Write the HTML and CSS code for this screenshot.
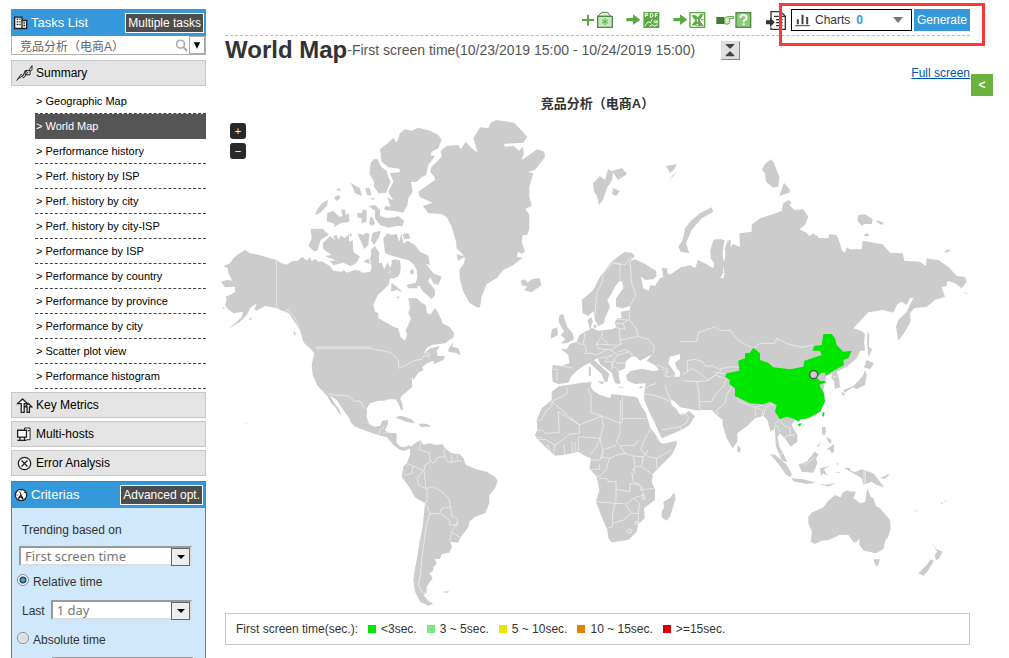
FILE: index.html
```html
<!DOCTYPE html>
<html lang="en">
<head>
<meta charset="utf-8">
<title>World Map</title>
<link rel="stylesheet" href="styles.css">
</head>
<body>
<div class="page">
  <aside class="sidebar">
    <div class="bar tasks-bar">
      <svg class="bar-icon" viewBox="42 48 42 39" aria-hidden="true"><path d="M44 50h22v10h14v24H44z" fill="#fff" stroke="#222" stroke-width="4"/><path d="M66 60v24M50 56h5M58 56h4M50 64h5M58 64h4M50 72h5M58 72h4M70 67h5M70 75h5" stroke="#222" stroke-width="4"/></svg>
      <h2 class="bar-title">Tasks List</h2>
      <button class="dark-btn" type="button">Multiple tasks</button>
    </div>
    <div class="search">
      <input class="search-input" type="text" value="竞品分析（电商A）" aria-label="Task">
      <svg class="search-icon" viewBox="524 116 40 40" aria-hidden="true"><circle cx="541" cy="132" r="12" fill="none" stroke="#aaa" stroke-width="5"/><path d="M550 141l11 12" stroke="#aaa" stroke-width="6"/></svg>
      <button class="search-drop" type="button" aria-label="Show tasks"><svg viewBox="0 0 10 10" aria-hidden="true"><path d="M1 1h8L5 9z"/></svg></button>
    </div>
    <nav class="menu">
      <button class="menu-head" type="button"><svg viewBox="46 192 52 52" aria-hidden="true"><path d="M48 240l14-20 5 6 7-16 6 4M50 236l14-9 6 4 12-17M74 209h15v13H74zM86 207l9-13v13l-6 5" fill="none" stroke="#222" stroke-width="3"/></svg>Summary</button>
      <ul class="menu-list">
        <li><a href="#">&gt; Geographic Map</a></li>
        <li><a class="active" href="#">&gt; World Map</a></li>
        <li><a href="#">&gt; Performance history</a></li>
        <li><a href="#">&gt; Perf. history by ISP</a></li>
        <li><a href="#">&gt; Perf. history by city</a></li>
        <li><a href="#">&gt; Perf. history by city-ISP</a></li>
        <li><a href="#">&gt; Performance by ISP</a></li>
        <li><a href="#">&gt; Performance by country</a></li>
        <li><a href="#">&gt; Performance by province</a></li>
        <li><a href="#">&gt; Performance by city</a></li>
        <li><a href="#">&gt; Scatter plot view</a></li>
        <li><a href="#">&gt; Performance histogram</a></li>
      </ul>
      <button class="menu-head" type="button"><svg viewBox="48 48 52 52" aria-hidden="true"><path d="M64 95V68H53l15-14 15 14H73v27zM82 95V78h-6l10-10 10 10h-7v17z" fill="#fff" stroke="#222" stroke-width="4"/></svg>Key Metrics</button>
      <button class="menu-head" type="button"><svg viewBox="48 134 52 52" aria-hidden="true"><path d="M74 147v-7h17v36H80" fill="#fff" stroke="#222" stroke-width="3"/><path d="M53 147h27v21H53zM60 169v7M74 169v7M52 178h28M84 148h5" fill="#fff" stroke="#222" stroke-width="4"/></svg>Multi-hosts</button>
      <button class="menu-head" type="button"><svg viewBox="46 220 52 52" aria-hidden="true"><circle cx="72" cy="246" r="19" fill="#f4f4f4" stroke="#222" stroke-width="4"/><path d="M63 237l18 18M81 237l-18 18" stroke="#222" stroke-width="4"/></svg>Error Analysis</button>
    </nav>
    <section class="criteria">
      <div class="bar criteria-bar">
        <svg class="bar-icon" viewBox="43 324 44 42" aria-hidden="true"><circle cx="65" cy="345" r="18" fill="#fff" stroke="#222" stroke-width="4"/><path d="M65 342l8 14-4 3-5-7-6 6-3-4z" fill="#222"/><path d="M65 345l-4-11M51 345h4M75 338l4-3M65 330v3" stroke="#222" stroke-width="3"/></svg>
        <h2 class="bar-title">Criterias</h2>
        <button class="dark-btn" type="button">Advanced opt.</button>
      </div>
      <form class="criteria-form">
        <label class="line" for="metric">Trending based on</label>
        <span class="pick pick-wide"><select id="metric"><option>First screen time</option></select></span>
        <label class="radio-row"><input type="radio" name="range" checked>Relative time</label>
        <div class="last-row"><label for="span">Last</label><span class="pick"><select id="span"><option>1 day</option></select></span></div>
        <label class="radio-row absolute-row"><input type="radio" name="range">Absolute time</label>
        <input class="date-box" type="text" aria-label="Start date">
      </form>
    </section>
  </aside>

  <main class="main">
    <div class="toolbar">
      <button class="tool tool-add" type="button" aria-label="Add to favourites"><svg width="31" height="18" viewBox="36 36 93 54"><path d="M36 63h36M54 47v33" stroke="#5aa843" stroke-width="6"/><path d="M83 52l12-12h18l10 12z" fill="#d8ecd2" stroke="#4d8a42" stroke-width="3"/><path d="M83 52h44v33H83z" fill="#c8e4c0" stroke="#4d8a42" stroke-width="4"/><path d="M105 58v20M96 63l18 10M96 73l18-10" stroke="#5aa843" stroke-width="3"/></svg></button>
      <button class="tool tool-pdf" type="button" aria-label="Export PDF"><svg width="34" height="18" viewBox="167 36 102 54"><path d="M168 57h20V46l22 16-22 16V67h-20z" fill="#5aa843"/><path d="M219 39h48v48h-48z" fill="#5aa843"/><path d="M225 55V43h7v6h-7M240 43v12h4l4-4v-5l-4-3zM255 55V43h8M255 49h6M222 82l12-14 6 4 6-12M238 82l8-5 6 5 10-5M250 66h13M250 71h13" fill="none" stroke="#fff" stroke-width="3"/></svg></button>
      <button class="tool tool-xls" type="button" aria-label="Export Excel"><svg width="33" height="18" viewBox="308 36 99 54"><path d="M309 57h20V46l22 16-22 16V67h-20z" fill="#5aa843"/><path d="M359 41h44v44h-44z" fill="#fff" stroke="#5aa843" stroke-width="4"/><path d="M366 50h10l20 28h-10zM396 50h-8l-22 28h10zM388 46h12M392 62h8M378 80h22" fill="#5aa843" stroke="#5aa843" stroke-width="3"/></svg></button>
      <button class="tool tool-help" type="button" aria-label="Help"><svg width="36" height="18" viewBox="437 36 108 54"><path d="M438 54h23v21h-23z" fill="#3e7d34"/><path d="M463 57l10-4h17v6h-14l3 4-2 4 2 4-6 4h-10z" fill="#d8ecd2" stroke="#5aa843" stroke-width="3"/><path d="M497 41h44v44h-44z" fill="#8ac977" stroke="#4d8a42" stroke-width="4"/><path d="M510 56c0-11 19-11 19 0 0 6-9 6-9 13M520 73v6" fill="none" stroke="#fff" stroke-width="6"/></svg></button>
      <button class="tool tool-report" type="button" aria-label="Add to report"><svg width="20" height="19" viewBox="588 33 60 57"><path d="M603 58V35h29l14 14v39h-43v-6" fill="#fff" stroke="#333" stroke-width="4"/><path d="M631 35v14h14M612 49h14M618 59h20M618 68h20M618 77h20" fill="none" stroke="#333" stroke-width="4"/><path d="M588 61h12v-9l14 15-14 15v-9h-12z" fill="#333"/></svg></button>
      <div class="chart-tools">
        <button class="charts" type="button" aria-haspopup="listbox"><svg class="charts-icon" viewBox="676 38 44 42" aria-hidden="true"><path d="M676 76h44" stroke="#444" stroke-width="3"/><path d="M684 57v15M698 43v29M712 50v22" stroke="#444" stroke-width="6"/></svg>Charts<b>0</b><svg class="charts-arrow" viewBox="0 0 10 6" aria-hidden="true"><path d="M0 0h10L5 6z" fill="#777"/></svg></button>
        <button class="generate" type="button">Generate</button>
        <span class="marker"></span>
      </div>
    </div>
    <header class="heading">
      <h1>World Map</h1><span class="period">-First screen time(10/23/2019 15:00 - 10/24/2019 15:00)</span>
      <button class="fold" type="button" aria-label="Collapse"><svg viewBox="0 0 18 18" aria-hidden="true"><path d="M4 2h9v1L9 7H8L4 3zM4 15h9v-1l-4-4H8l-4 4z" fill="#444"/></svg></button>
    </header>
    <div class="full"><a href="#">Full screen</a></div>
    <h2 class="map-title">竞品分析（电商A）</h2>
    <div class="map">
      <svg class="map-svg" viewBox="225 114 745 496" role="img" aria-label="World map, China highlighted">
        <!-- North America -->
        <g transform="translate(215 230) scale(.33333)">
          <path class="land" d="M90 60L105 70 130 74 160 83 184 90 200 100 215 104 230 94 248 92 262 80 275 92 285 82 290 94 300 86 310 95 320 94 345 108 355 122 380 125 386 120 395 128 420 120 435 122 440 128 466 126 470 110 465 85 478 50 490 65 492 100 500 98 508 118 518 96 525 112 522 132 530 120 530 90 545 88 556 100 556 130 540 145 525 145 520 165 505 180 488 195 475 225 480 245 490 250 490 265 515 278 538 292 550 295 556 320 570 332 576 315 572 300 580 285 588 265 580 250 585 235 580 205 605 205 620 218 632 225 636 250 648 253 655 240 662 235 680 270 682 280 705 292 717 310 716 322 690 340 650 345 635 355 625 372 645 355 660 352 675 348 665 362 668 378 690 378 685 390 657 402 655 392 635 400 622 412 625 420 610 428 602 440 596 450 590 440 592 470 575 485 560 498 556 508 562 520 564 540 558 540 548 515 540 508 520 508 508 512 490 512 465 520 456 535 455 560 462 582 478 590 495 588 502 572 520 570 518 585 510 600 520 608 545 610 545 640 560 652 575 655 565 660 545 652 530 638 515 622 490 615 460 605 420 590 408 578 400 560 385 540 365 510 350 500 345 495 358 520 370 535 380 556 372 550 360 530 350 522 338 500 325 485 308 468 293 435 290 405 298 370 280 345 265 335 255 300 235 270 222 250 195 240 180 233 150 228 125 242 118 238 125 220 105 235 95 255 75 275 38 298 60 280 80 262 84 245 55 250 40 238 30 225 35 210 32 200 50 192 60 185 60 170 30 172 18 155 35 150 52 152 40 130 38 115 25 108 45 100 55 85 70 72Z"/>
          <path class="land" d="M700 358L715 335 712 350 730 355 737 375 720 368 700 365ZM265 338L285 343 300 360 298 368 285 355ZM234 304l8 4-2 12zM101 268l12-7-6 10zM21 232l10 2-6 3zM545 562L560 558 590 568 602 580 580 574 560 564ZM612 582L635 582 650 590 620 590ZM585 591l12 1zM672 380l12-2-6 4zM91 578l5 4-3 2z"/>
          <path class="border" d="M184 92V230L205 248 220 238 240 265 252 292M302 351H472M302 356H472L485 360 505 362 530 370 550 390 552 415 575 405 595 392 620 388 628 375 640 380 643 372 632 368M335 490L360 495 400 498 420 515 435 512 445 530 457 540M492 612L497 598 508 590M505 610L515 606 528 608M515 622L525 610 545 612M528 635l15 4"/>
        </g>
        <!-- Arctic islands, Greenland, Iceland -->
        <g transform="translate(300 110) scale(.33333)">
          <path class="land" d="M355 53L390 62 415 75 425 90 415 115 395 125 392 136 405 138 385 165 378 195 365 202 350 215 333 216 338 245 325 265 322 285 310 308 285 303 253 300 255 288 272 290 262 262 280 272 265 245 280 215 270 190 300 186 298 176 265 172 245 155 240 118 265 98 280 83 290 98 300 70 315 58 335 62ZM222 147L233 148 243 170 260 182 265 200 272 215 258 248 235 250 222 230 222 215 208 190 212 160ZM205 288L225 285 240 300 240 318 260 324 285 322 295 318 312 332 308 348 290 348 265 353 240 345 225 325 225 302ZM172 310L185 308 190 298 200 302 200 335 185 340 185 325 172 322ZM210 322L218 322 225 340 218 348 208 342ZM68 278L84 270 82 285 60 310 45 315 52 298ZM82 308L100 303 118 320 128 318 123 298 135 300 138 315 147 310 148 335 122 340 100 352 105 342 80 334ZM152 218L180 235 186 258 165 250ZM195 235L210 235 214 256 202 256ZM208 266l16-2-2 6zM103 262L116 254 122 265 108 274ZM108 240L118 234 122 244ZM32 356L68 357 87 374 62 390 52 422 42 424 25 408 35 385ZM68 400L90 378 105 390 100 378 110 375 116 390 122 376 134 385 146 372 148 395 158 390 160 425 180 440 168 460 152 468 130 458 100 466 90 452 110 452 75 438 95 435 70 418ZM148 372l8 0-4 12zM172 370L190 375 198 368 208 372 205 405 193 418 185 400ZM218 368L242 362 238 380 222 405 213 392ZM190 455L205 445 212 462ZM212 420L225 408 238 430 235 455 215 455ZM250 385L262 370 275 375 290 372 298 395 304 370 310 402 322 392 345 405 360 425 385 437 390 465 378 462 400 490 425 500 415 525 400 520 390 500 385 515 405 540 405 555 395 568 370 545 358 528 345 528 352 500 350 480 340 462 325 450 285 440 255 430ZM278 455L300 450 302 475 295 500 275 502 268 480ZM275 518L290 530 308 545 290 540 273 545ZM288 562l10-4-2 8zM330 482L340 476 342 490 332 494ZM320 525L345 518 355 535 325 535ZM308 372L325 370 332 385 312 388Z"/>
          <path class="land" d="M520 85L540 52 565 55 572 38 590 30 643 38 682 80 670 98 612 102 615 110 640 108 658 122 668 110 672 130 665 150 680 140 712 118 733 125 735 142 705 180 684 186 700 190 688 230 688 260 695 288 676 296 688 315 688 355 682 375 668 375 665 395 675 425 665 432 655 425 650 440 668 443 640 465 610 480 590 505 560 522 545 560 540 592 530 592 508 578 490 545 480 510 478 480 492 460 495 445 485 430 470 415 468 395 455 350 440 322 425 312 385 310 368 288 398 278 360 262 355 245 405 210 403 200 390 185 395 170 425 140 422 122 440 108 475 105 482 118 497 95 515 115 533 128ZM470 432l24 8-20 12zM662 512L675 508 682 518 695 508 718 504 725 525 695 547 672 540 682 530 665 526Z"/>
        </g>
        <!-- South America -->
        <g transform="translate(380 410) scale(.33333)">
          <path class="land" d="M90 112L105 100 122 90 130 104 150 100 165 105 188 103 195 115 215 130 240 133 250 145 258 165 275 172 290 178 320 185 345 200 353 212 345 235 328 255 328 280 315 310 285 320 268 335 265 352 240 385 235 398 210 395 216 410 208 428 185 432 180 447 165 447 170 462 160 470 160 482 148 490 158 505 150 515 140 530 140 550 130 555 145 572 160 582 145 587 120 575 105 545 100 510 105 475 112 440 118 400 128 350 135 280 105 262 90 235 65 200 70 170 80 160 90 135ZM15 68L48 70 48 95 60 112 75 110 90 105 92 114 75 122 60 120 40 105ZM190 545L208 543 200 550ZM45 22L60 18 95 32 102 40 80 36ZM115 41L138 41 150 48 122 50Z"/>
          <path class="border" d="M124 92L118 120 148 128 150 155 135 165 132 182M150 150L160 160 172 142 195 140M192 118L195 140 205 157 247 152M215 135V155M232 135V152M78 160L100 168 130 182 112 205 115 225 140 237 142 265 137 280M100 168L95 190 70 196M132 182L138 235M140 235L160 230 185 245 207 265 212 292 185 295 180 310 150 312 142 290 135 280M150 310L138 350 132 400 125 450 122 490 115 525 125 545 140 550M212 292L215 318 232 325 232 345 208 345 210 332 182 312M234 335L215 365 210 395M218 368L240 382"/>
        </g>
        <!-- Europe -->
        <g transform="translate(530 240) scale(.33333)">
          <path class="land" d="M155 180L190 150 210 110 245 65 270 45 285 36 305 38 315 48 303 60 300 120 270 122 258 135 245 160 232 180 240 200 225 235 222 250 205 258 195 240 190 213 175 228 158 220Z"/>
          <path class="land" d="M270 75L315 58 345 72 378 92 380 108 370 118 345 120 332 108 340 145 355 152 362 135 375 138 390 115 402 110 405 100 395 85 412 85 412 100 425 105 450 85 480 75 495 85 505 60 530 75 550 85 555 60 540 35 550 0 602 0 602 478 470 478 345 460 348 430 315 432 292 422 288 406 300 396 268 396 266 408 272 432 255 430 245 398 210 372 203 355 192 360 215 380 238 402 232 425 224 425 215 402 188 378 180 368 165 375 140 392 122 412 115 428 85 432 68 425 66 395 68 375 95 378 118 370 115 345 92 326 110 328 120 312 140 305 148 285 165 275 180 268 172 240 185 232 188 245 182 262 205 272 245 268 258 262 255 245 262 235 275 235 272 215 300 210 300 198 278 205 258 200 258 175 280 145 278 128 270 118Z"/>
          <path class="land" d="M88 225L100 222 105 240 112 262 128 280 132 298 110 310 92 310 106 298 92 285 102 275 95 262 86 245ZM65 268L82 262 84 285 62 296ZM176 382L182 380 183 408 176 408ZM202 424L222 425 218 434ZM265 440L285 442 270 444ZM325 442l15-4-8 8zM190 256l10-2-2 10-8-2z"/>
          <path class="sea" d="M420 350L450 343 457 352 435 368 440 385 460 405 462 432 432 424 435 400 415 370ZM262 396L285 385 288 362 305 350 318 350 330 362 350 352 368 342 350 362 375 376 388 390 370 393 335 386 300 394 280 400ZM584 0L596 0 580 75 582 100 596 95 580 117 570 115 580 100 574 60Z"/>
          <path class="border" d="M195 228L200 160 215 130 220 100 250 68 270 75 270 120M250 68L285 75 300 52 312 60M300 60L305 130 318 165 300 198M298 212V240L318 265 325 290 355 298 373 320 370 340M262 238L295 240M258 252L280 250 295 240M255 262L285 268 280 250M268 268L272 315 245 315 200 312 210 295M216 275L215 295 235 310M272 300L320 290M165 278L160 310 170 330 165 340 185 340 200 345 230 330M200 312L205 325 240 330 265 318M135 305L160 315M240 330L265 345 300 335 310 355M250 345L235 350 225 365M205 355L230 350M265 345L250 360 262 370 290 368M225 365L245 365 245 390M250 360L248 380 262 385 262 395M300 335L285 330 265 335M68 388L82 388 80 425M95 378L128 384M380 375L415 388M395 388L415 395 405 400 415 410M400 400L410 412 425 408M600 265L585 278 560 262 510 275 505 305 465 305 430 298 415 318 418 335M472 400V362L495 358 515 375 545 380 560 395M462 400L490 392 510 410 545 425 560 410 590 410M545 425L530 440 505 450 505 478M545 385L570 380 600 385M555 395L580 395M350 432L380 425 400 420 410 440 420 478M348 450L370 455 385 430"/>
        </g>
        <!-- Africa and the Middle East -->
        <g transform="translate(520 370) scale(.33333)">
          <path class="land" d="M118 48L145 45 185 38 215 36 212 48 220 62 240 75 270 84 275 72 300 75 345 80 355 85 366 112 378 130 392 175 410 198 418 215 428 222 470 212 470 225 455 255 430 280 400 310 395 335 405 358 405 390 372 415 374 445 355 462 350 485 325 510 275 517 265 505 262 480 245 440 228 395 238 360 230 320 208 295 213 265 195 258 175 245 155 250 130 255 105 257 80 235 50 205 45 195 52 180 50 150 65 115 95 90 95 65ZM462 367L467 385 450 440 440 452 425 442 425 425 432 412 430 395 450 385Z"/>
          <path class="land" d="M372 86L374 55 378 40 410 25 540 15 540 122 505 116 480 112 465 95 452 88 455 105 470 118 478 132 498 130 505 122 525 138 508 165 485 180 425 205 418 190 400 150 385 120Z"/>
          <path class="border" d="M96 95L140 72 142 55M96 95L178 165 245 138 213 128 213 75 205 60 215 48M96 95V110L78 122 65 150H50M115 125L118 188 78 190 65 180 50 182M115 125L178 165 178 190 150 192 120 215 105 225 75 208 50 208M245 138L300 160 302 90M307 80V145H382M307 145V158L300 160M300 160V190L290 215 300 228 315 250 340 258 370 260 385 240M245 138L250 170 240 205 175 200 175 240M240 205L230 230 210 255M240 205L248 240 290 225M213 270H240L250 245M248 240L245 262 270 265 290 255 315 250M270 262L258 300 240 318 228 318M235 325H260L265 335H288V358L330 365V340L360 345M340 258L345 290 335 305 340 335 360 345 362 360 403 355M345 290L365 290 400 315M370 260L365 290M362 240L375 205 385 190 390 178M362 240L385 260 410 265 455 240M410 265V295M355 210L345 225 300 228M288 358V395M228 395L285 400 320 402 340 385 370 375 365 350M285 400L278 430V470L262 475M278 460L310 450 335 430 318 405M340 385L358 400 355 430 335 430M355 430L355 462M105 225L100 255M132 222L135 255M155 215L158 248M165 215V245M70 235L85 225 90 245M325 478l8 0 3 8-10 4-5-5zM345 455h8v8h-7zM368 375v12h6v-12zM338 298h6v14M50 202h14M213 298h25v-15M374 72L400 75 430 85 452 96M425 180L480 170 500 158M480 170l5 12M435 45L450 90M372 60L385 48 410 40M498 130l8 12-6 16"/>
          <path class="sea" d="M354 84l4 0 6 18-2 2z"/>
        </g>
        <!-- Siberia and the Russian Arctic -->
        <g transform="translate(660 150) scale(.33333)">
          <path class="land" d="M0 388L18 385 25 378 65 350 90 350 110 354 112 330 135 340 162 358 162 340 152 325 152 305 165 268 187 268 185 300 193 345 180 385 190 385 200 350 195 295 203 270 208 300 218 282 240 290 238 250 275 245 275 225 300 205 340 192 365 183 370 160 385 150 395 158 388 165 403 180 430 178 445 200 435 225 418 238 440 248 448 258 460 250 478 264 505 265 508 252 530 255 540 280 545 300 555 308 560 292 570 298 605 298 608 272 668 283 690 308 728 310 733 332 780 335 798 348 800 325 835 330 865 350 890 378 915 380 920 395 905 415 885 400 862 392 860 408 845 412 855 440 825 450 800 470 762 475 750 490 752 515 735 545 715 572 708 530 715 510 740 485 760 443 750 445 740 465 725 455 712 462 700 488 670 480 625 487 580 535 610 545 615 602 0 602Z"/>
          <path class="land" d="M55 290L68 270 75 235 95 210 120 190 155 172 160 185 125 205 95 240 78 280 88 310 62 305ZM18 48L50 42 45 55 30 70ZM332 28L340 35 358 80 355 110 340 113 318 95 315 70 306 60 315 42ZM372 98L390 120 388 128 358 138ZM595 195L615 193 638 208 635 222 615 222 605 227 592 212ZM648 210L672 218 666 225 650 216ZM610 258L620 248 630 258ZM852 305L865 297 872 302 858 308ZM910 426L928 433 912 430ZM6 352l14 8-2 14-8 8z"/>
        </g>
        <path class="land" d="M593 183L600 176 605 180 608 169 613 172 612 180 607 188 603 200 599 205 597 196 594 192ZM612 171L622 168 627 174 618 180ZM613 188l7 3-4 5-4-2zM669 180l4-5 4-2z"/>
        <!-- Southern and eastern Asia -->
        <g transform="translate(680 310) scale(.33333)">
          <path class="land" d="M0 0H565L518 55 540 62 555 72 552 100 530 145 500 170 470 185 478 210 480 232 465 237 462 212 453 205 458 192 440 195 430 240 430 285 420 305 385 325 345 330 335 345 352 375 352 395 332 410 320 392 300 370 293 380 298 410 310 430 322 458 305 450 290 415 287 405 285 355 272 365 262 330 250 318 225 325 205 345 172 370 172 395 158 415 140 385 128 345 128 330 110 315 95 300 50 300 0 288Z"/>
          <path class="land" d="M562 62L568 75 567 110 576 118 566 142 562 110ZM560 150L582 160 570 178 552 172ZM555 180L560 195 555 225 530 238 518 232 495 248 490 240 520 228 540 208 550 195ZM483 246L495 250 490 260ZM172 405L182 415 180 428 172 425ZM426 352L436 350 438 365 432 378 426 370ZM438 380L455 390 452 402 445 395ZM440 418L462 402 462 425 455 430 450 420ZM410 410l14-16-8 16zM270 432L285 434 318 462 335 490 333 502 318 494 295 462ZM355 462L380 455 405 424 416 434 408 445 412 460 400 488 365 485ZM420 475L450 468 432 478 442 498 430 490 422 498ZM335 505L370 508 408 518 380 522 340 514ZM418 522L440 524 468 518 445 530ZM492 474L510 474 512 482 525 486 545 478 580 490 600 515 612 532 590 525 575 515 550 524 545 505 520 490ZM600 505L628 492 615 506ZM470 458l5 2-2 8zM470 486l16 0-14 3z"/>
          <path class="border" d="M0 95L50 95 55 68 105 50 120 62 150 60 175 92 220 115 240 100 285 100 290 85 325 102 365 112 400 105M22 188V152L45 148 68 155 75 168 100 168 115 178 150 170 178 172M8 195L35 175 60 190 85 210 100 200M10 212L50 215 55 235 60 300M50 215L85 212 105 195 135 205M100 185L120 190 135 190M105 195L125 180M140 205L130 230 105 255 95 275 60 275M155 230L140 255 135 280 110 300 115 315M172 262L178 275 225 292 250 285M225 292L228 320M232 295L250 300 245 318M250 318L258 290 285 280M285 355L285 340 305 328M300 335L318 350 330 355 332 378M300 365L290 345M312 395L318 378 345 375M355 460L380 462 405 440M0 315L15 312 25 300M458 202L470 198M552 480V520M556 480V520M300 432l12-2"/>
          <path class="china" d="M220 113L240 130 240 150 265 158 280 172 330 178 370 170 373 152 425 135 420 122 398 122 402 108 425 105 430 72 455 72 465 85 470 105 490 125 515 122 505 145 490 150 492 165 465 180 435 198 437 188 425 188 410 202 420 213 437 213 438 217 418 225 432 250 435 275 420 305 385 325 362 328 355 335 345 328 320 320 300 328 285 305 290 285 270 275 250 283 210 280 165 258 165 235 148 222 150 210 135 200 140 190 178 182 175 152 195 145 195 130 210 128ZM430 305L434 308 430 322 426 315ZM353 342L366 340 358 350Z"/>
          <circle cx="401" cy="194" r="12" fill="#ccc" stroke="#505050" stroke-width="4"/>
        </g>
        <!-- Oceania -->
        <g transform="translate(740 450) scale(.33333)">
          <path class="land" d="M205 200L215 188 250 172 265 152 285 135 302 142 308 128 322 120 326 124 348 125 340 145 362 160 375 156 382 115 392 140 400 145 408 168 420 175 440 198 450 210 452 235 445 260 436 272 430 298 408 310 390 306 372 302 358 285 358 265 348 278 340 275 325 255 300 254 285 262 265 270 245 272 225 282 212 275 216 245 205 220ZM400 328L420 328 415 345 408 350ZM575 280L590 298 608 305 598 325 588 332 584 315 592 305ZM572 328L582 332 560 368 550 377 535 370 560 345ZM520 176L536 188 526 184ZM602 158L612 158 604 162ZM612 153l8-2-4 4zM486 98l6 3zM494 104l5 10zM460 82l8 6zM444 70l2 8-6 4zM535 142l4 4z"/>
        </g>
      </svg>
      <div class="zoom">
        <button type="button" aria-label="Zoom in">+</button>
        <button type="button" aria-label="Zoom out">−</button>
      </div>
    </div>
    <div class="legend">
      <span>First screen time(sec.):</span>
      <span class="key key-green">&lt;3sec.</span>
      <span class="key key-light">3 ~ 5sec.</span>
      <span class="key key-yellow">5 ~ 10sec.</span>
      <span class="key key-orange">10 ~ 15sec.</span>
      <span class="key key-red">&gt;=15sec.</span>
    </div>
  </main>
  <button class="side-toggle" type="button">&lt;</button>
</div>
</body>
</html>
```

FILE: styles.css
```css
* { box-sizing: border-box; }
body {
  margin: 0;
  background: #fff;
  color: #333;
  font: 12px/16px "Liberation Sans", Arial, "Noto Sans CJK SC", sans-serif;
}
button, input, select { font: inherit; color: inherit; margin: 0; padding: 0; border: 0; border-radius: 0; }
button { cursor: pointer; background: none; }
h1, h2, ul { margin: 0; padding: 0; font-weight: normal; }

.page {
  display: flex;
  align-items: flex-start;
  height: 100vh;
  overflow: hidden;
  padding: 0 16px 0 11px;
}

/* Sidebar */
.sidebar { flex: 0 0 195px; min-width: 0; padding-top: 9px; }
.bar {
  display: flex;
  align-items: center;
  height: 27px;
  padding: 0 2px 0 3px;
  background: #3598db;
  color: #fff;
}
.bar-icon { flex: none; width: 14px; height: 14px; margin-right: 3px; }
.bar-title { flex: 1; font-size: 13px; white-space: nowrap; }
.dark-btn {
  height: 20px;
  padding: 0 2px;
  border: 1px solid #fff;
  background: #4d4d4d;
  color: #fff;
  white-space: nowrap;
}
.search {
  display: flex;
  align-items: center;
  height: 19px;
  border: 1px solid #b0b0b0;
  border-top: 0;
  margin-bottom: 5px;
  background: #fff;
}
.search-input { flex: 1; width: 0; min-width: 0; height: 18px; padding-left: 8px; color: #666; background: none; outline: 0; }
.search-icon { flex: none; width: 13px; height: 13px; margin-right: 1px; }
.search-drop { flex: none; width: 16px; height: 18px; border: 1px solid #aaa; line-height: 0; }
.search-drop svg { width: 8px; height: 9px; }
.menu { display: flex; flex-direction: column; gap: 3px; }
.menu-head {
  display: flex;
  align-items: center;
  gap: 3px;
  height: 26px;
  padding-left: 4px;
  border: 1px solid #c8c8c8;
  background: #e4e4e4;
  color: #000;
  text-align: left;
}
.menu-head svg { width: 17px; height: 17px; }
.menu-list { list-style: none; margin-left: 24px; font-size: 11px; }
.menu-list a {
  display: block;
  height: 25px;
  padding-left: 1px;
  border-bottom: 1px dashed #444;
  color: #000;
  line-height: 24px;
  text-decoration: none;
}
.menu-list .active { background: #555; border-bottom: 1px solid #555; color: #fff; }

.criteria { margin-top: 5px; border: 1px solid #777; background: #d0e8fb; }
.criteria-bar { height: 26px; padding-left: 2px; }
.criteria-form { display: flex; flex-direction: column; padding: 14px 13px 0 10px; }
.pick { position: relative; display: block; flex: 1; height: 20px; }
.pick-wide { flex: none; margin: 8px 0 0 -3px; }
.pick select {
  appearance: none;
  width: 100%;
  height: 20px;
  padding: 0 20px 0 4px;
  border: 2px solid;
  border-color: #999 #ddd #ddd #999;
  background: #fff;
  color: #777;
  font: 13px/16px "Noto Sans", sans-serif;
}
.pick::before {
  content: "";
  position: absolute;
  right: 2px;
  top: 2px;
  width: 17px;
  height: 16px;
  border: 1px solid #666;
  background: #eee;
  pointer-events: none;
}
.pick::after {
  content: "";
  position: absolute;
  right: 7px;
  top: 9px;
  border: 4px solid transparent;
  border-top-color: #000;
  border-bottom: 0;
  pointer-events: none;
}
.radio-row { display: flex; align-items: center; gap: 4px; margin: 8px 0 0 -5px; }
.radio-row input {
  appearance: none;
  width: 12px;
  height: 12px;
  margin-bottom: 4px;
  border: 1px solid #8a8a8a;
  border-radius: 50%;
  background: radial-gradient(circle, #ddd 0 3px, #f4f4f4 5px);
}
.radio-row input:checked { background: radial-gradient(circle, #4bb3e4 0 1px, #123f63 3px, #fff 4px); }
.last-row { display: flex; align-items: center; gap: 6px; margin-top: 10px; }
.last-row label { padding-top: 2px; }
.absolute-row { margin-top: 12px; }
.date-box { height: 20px; margin: 9px -1px 0 30px; border: 2px solid #999; background: #fff; }

/* Main column */
.main { flex: 1; min-width: 0; margin: 0 1px 0 19px; padding-top: 9px; }
.toolbar {
  display: flex;
  justify-content: flex-end;
  align-items: center;
  padding-bottom: 4px;
  border-bottom: 1px dashed #bbb;
}
.tool { line-height: 0; }
.tool svg { display: block; }
.tool-add, .tool-pdf { margin-right: 13px; }
.tool-xls { margin-right: 10px; }
.tool-help { margin-right: 14px; }
.tool-report { margin-right: 5px; }
.chart-tools { position: relative; display: flex; gap: 2px; height: 22px; }
.charts {
  display: flex;
  align-items: center;
  width: 121px;
  padding: 0 8px 0 3px;
  border: 1px solid #000;
  background: #fff;
}
.charts-icon { width: 15px; height: 14px; margin-right: 5px; }
.charts b { margin-left: 6px; color: #3598db; }
.charts-arrow { width: 10px; height: 6px; margin-left: auto; }
.generate { width: 56px; background: #3598db; color: #fff; }
.marker {
  position: absolute;
  inset: -6px -15px -15px -12px;
  border: 3px solid #fb3838;
  pointer-events: none;
}
.heading { display: flex; align-items: center; height: 28px; white-space: nowrap; }
.heading h1 { font-size: 24px; font-weight: bold; line-height: 28px; }
.period { font-size: 14px; color: #555; }
.fold {
  width: 19px;
  height: 19px;
  margin-left: 26px;
  border: 1px solid;
  border-color: #ddd #888 #888 #ddd;
  background: #e0e0e0;
  line-height: 0;
}
.full { line-height: 18px; text-align: right; }
.full a { color: #0058a8; }
.map-title { margin-top: 12px; font-size: 13px; font-weight: bold; line-height: 20px; text-align: center; }
.map { position: relative; }
.map-svg { display: block; width: 100%; overflow: visible; }
.land { fill: #ccc; }
.sea { fill: #fff; }
.border { fill: none; stroke: #f4f4f4; stroke-width: 2; }
.china { fill: #00e600; }
.zoom { position: absolute; left: 5px; top: 9px; display: grid; gap: 4px; }
.zoom button {
  width: 16px;
  height: 16px;
  border-radius: 3px;
  background: #292929;
  color: #fff;
  font-size: 11px;
  line-height: 14px;
}
.legend {
  display: flex;
  align-items: center;
  gap: 10px;
  height: 32px;
  margin-top: 3px;
  padding-left: 10px;
  border: 1px solid #c8c8c8;
  white-space: nowrap;
}
.key { display: flex; align-items: center; gap: 5px; }
.key::before { content: ""; width: 8px; height: 8px; background: currentColor; }
.key-green::before { background: #00e600; }
.key-light::before { background: #80e680; }
.key-yellow::before { background: #e6e600; }
.key-orange::before { background: #e68000; }
.key-red::before { background: #d90000; }
.side-toggle {
  flex: 0 0 22px;
  height: 22px;
  margin-top: 74px;
  background: #6cb33e;
  color: #fff;
  font-weight: bold;
}
```
